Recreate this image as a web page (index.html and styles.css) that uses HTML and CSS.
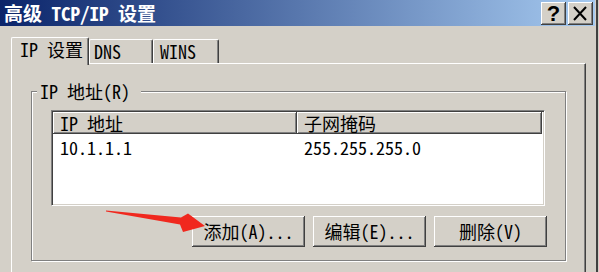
FILE: index.html
```html
<!DOCTYPE html>
<html lang="zh-CN">
<head>
<meta charset="utf-8">
<title>高级 TCP/IP 设置</title>
<link rel="stylesheet" href="styles.css">
</head>
<body>
<div class="window">
  <div class="titlebar">
    <span class="title">高级 TCP/IP 设置</span>
    <div class="caption-btns">
      <button class="cap-btn help">?</button>
      <button class="cap-btn close"><svg width="25" height="23" viewBox="0 0 25 23"><path d="M6 5 L18 18 M18 5 L6 18" stroke="#000" stroke-width="2" fill="none"/></svg></button>
    </div>
  </div>
  <div class="client">
    <div class="tabs">
      <div class="tab active">IP 设置</div>
      <div class="tab dns">DNS</div>
      <div class="tab wins">WINS</div>
    </div>
    <div class="panel">
      <div class="group">
        <span class="group-label">IP 地址(R)</span>
        <div class="listview">
          <div class="lv-header">
            <div class="lv-col c1">IP 地址</div>
            <div class="lv-col c2">子网掩码</div>
          </div>
          <div class="lv-row">
            <div class="cell c1">10.1.1.1</div>
            <div class="cell c2">255.255.255.0</div>
          </div>
        </div>
        <div class="btn-row">
          <button class="btn">添加(A)...</button>
          <button class="btn">编辑(E)...</button>
          <button class="btn">删除(V)</button>
        </div>
      </div>
    </div>
  </div>
</div>
<svg class="arrow" width="599" height="272" viewBox="0 0 599 272">
  <polygon points="106,210.5 181,217.5 188,213.5 205,226 183,232 180,224.5 106,211.5" fill="#f0281e"/>
</svg>
</body>
</html>
```
FILE: styles.css
```css
* { box-sizing: border-box; }
html, body { margin: 0; padding: 0; }
body {
  background: #d4d0c8;
  width: 599px;
  height: 272px;
  overflow: hidden;
  position: relative;
  font-family: "Noto Sans Mono CJK SC", "Noto Sans CJK SC", sans-serif;
  font-size: 18px;
  color: #000;
}
.window {
  width: 598px;
  height: 272px;
  padding-right: 1px;
  border-right: 2px solid #404040;
}
.titlebar {
  height: 26px;
  background: linear-gradient(to right, #0a246a, #a6caf0);
  display: flex;
  justify-content: space-between;
  align-items: flex-start;
  padding: 0 2px 0 4px;
}
.title {
  color: #fff;
  font-weight: bold;
  font-size: 19px;
  line-height: 26px;
  white-space: nowrap;
}
.caption-btns {
  display: flex;
  gap: 2px;
  margin-top: 2px;
}
.cap-btn {
  width: 25px;
  height: 23px;
  padding: 0;
  border: none;
  background: #d4d0c8;
  box-shadow: inset -1px -1px #404040, inset 1px 1px #fff, inset -2px -2px #808080;
  display: flex;
  align-items: center;
  justify-content: center;
}
.cap-btn svg { display: block; }
.help {
  font-family: "Liberation Sans", sans-serif;
  font-weight: bold;
  font-size: 22px;
  line-height: 23px;
  color: #000;
}
.client {
  padding: 11px 0 0 11px;
}
.tabs {
  display: flex;
  align-items: flex-start;
  height: 26px;
  position: relative;
  z-index: 2;
}
.tab {
  height: 24px;
  margin-top: 2px;
  border-top: 1px solid #fff;
  border-left: 1px solid #fff;
  border-right: 1px solid #404040;
  box-shadow: inset -1px 0 #808080;
  border-radius: 2px 2px 0 0;
  background: #d4d0c8;
  line-height: 22px;
  white-space: nowrap;
}
.tab.active {
  width: 78px;
  height: 28px;
  margin-top: 0;
  padding-left: 8px;
}
.tab.dns { width: 64px; padding-left: 4px; }
.tab.wins { width: 66px; padding-left: 6px; }
.panel {
  width: 575px;
  height: 209px;
  border-top: 1px solid #fff;
  border-left: 1px solid #fff;
  border-right: 1px solid #404040;
  box-shadow: inset -1px 0 #808080;
  padding: 27px 0 0 19px;
}
.group {
  position: relative;
  width: 535px;
  height: 170px;
  border: 1px solid #808080;
  box-shadow: inset 1px 1px #fff, 1px 1px #fff;
  padding: 18px 0 0 19px;
}
.group-label {
  position: absolute;
  left: 5px;
  top: -11px;
  width: 104px;
  padding-left: 3px;
  line-height: 20px;
  background: #d4d0c8;
  white-space: nowrap;
}
.listview {
  width: 494px;
  height: 96px;
  background: #fff;
  border: 1px solid;
  border-color: #808080 #fff #fff #808080;
  box-shadow: inset 1px 1px #404040, inset -1px -1px #d4d0c8;
  padding: 1px;
}
.lv-header {
  display: flex;
  height: 22px;
}
.lv-col {
  height: 22px;
  line-height: 22px;
  padding-left: 7px;
  background: #d4d0c8;
  box-shadow: inset -1px -1px #404040, inset 1px 1px #fff, inset -2px -2px #808080;
  white-space: nowrap;
}
.lv-col.c1 { width: 244px; }
.lv-col.c2 { width: 245px; }
.lv-row {
  display: flex;
  padding-top: 2px;
  line-height: 22px;
}
.cell { padding-left: 7px; white-space: nowrap; }
.cell.c1 { width: 244px; }
.btn-row {
  display: flex;
  justify-content: flex-end;
  gap: 8px;
  margin-top: 10px;
  padding-right: 18px;
}
.btn {
  width: 113px;
  height: 31px;
  padding: 0;
  border: none;
  background: #d4d0c8;
  box-shadow: inset -1px -1px #404040, inset 1px 1px #fff, inset -2px -2px #808080;
  font: inherit;
  color: #000;
  line-height: 29px;
  text-align: center;
}
.arrow {
  position: absolute;
  left: 0;
  top: 0;
  pointer-events: none;
}
```
